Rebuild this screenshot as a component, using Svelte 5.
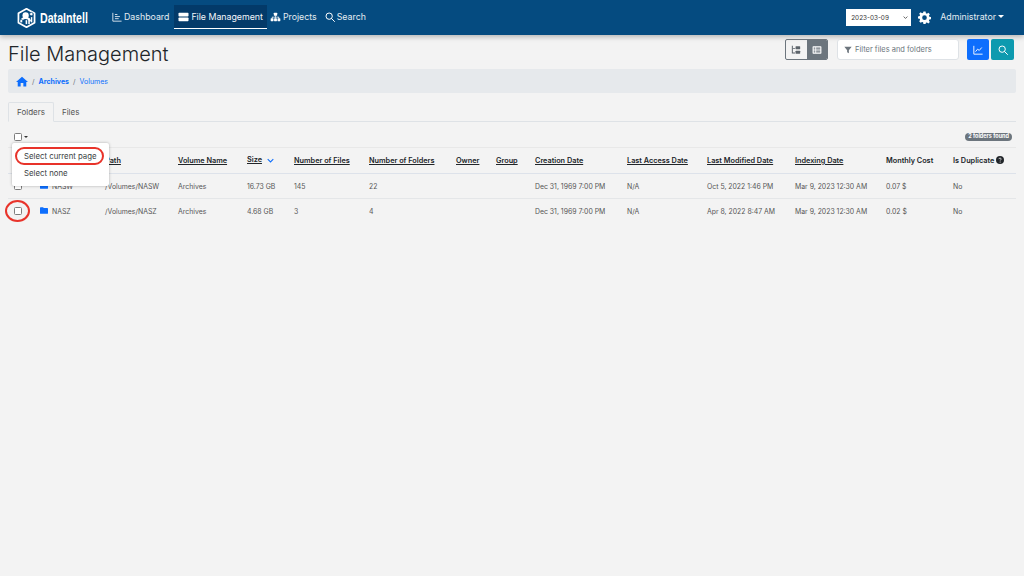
<script>
  const cols = ['c0','c1','c2','c3','c4','c5','c6','c7','c8','c9','c10','c11','c12','c13','c14'];
  const heads = [
    ['Path','path'],['Volume Name'],['Size'],['Number of Files'],['Number of Folders'],['Owner'],['Group'],
    ['Creation Date'],['Last Access Date'],['Last Modified Date'],['Indexing Date']
  ];
  const rows = [
    ['NASW','/Volumes/NASW','Archives','16.73 GB','145','22','','','Dec 31, 1969 7:00 PM','N/A','Oct 5, 2022 1:46 PM','Mar 9, 2023 12:30 AM','0.07 $','No'],
    ['NASZ','/Volumes/NASZ','Archives','4.68 GB','3','4','','','Dec 31, 1969 7:00 PM','N/A','Apr 8, 2022 8:47 AM','Mar 9, 2023 12:30 AM','0.02 $','No']
  ];
</script>

<header class="nav">
  <div class="brand">
    <svg class="logo" viewBox="0 0 24 24" width="21" height="22" fill="none">
      <path d="M12 1.500 21.200 6.700V17.300L12 22.500 2.800 17.300V6.700Z" stroke="#fff" stroke-width="2" stroke-linejoin="round"/>
      <circle cx="11" cy="9" r="3.600" fill="#fff"/>
      <path d="M5.500 17c.4-3.400 2.600-5 5.500-5s4 1 5 3" stroke="#fff" stroke-width="2.200" stroke-linecap="round"/>
      <circle cx="17.500" cy="7.500" r="2" fill="#fff" stroke="#054b80" stroke-width=".8"/>
      <circle cx="6" cy="15.500" r="1.800" fill="#fff" stroke="#054b80" stroke-width=".8"/>
      <rect x="11" y="14.500" width="1.800" height="4.500" fill="#fff"/>
      <rect x="14" y="12.500" width="1.800" height="6.500" fill="#fff"/>
      <rect x="17" y="11" width="1.600" height="6" fill="#fff"/>
    </svg>
    <span class="brandname">DataIntell</span>
  </div>
  <nav class="links">
    <a class="link">
      <svg viewBox="0 0 12 12" width="10" height="10" fill="none" stroke="#dfe8f0" stroke-width="1.100"><path d="M1 1v10h10.500"/><path d="M3.500 3h3M3.500 5.500h6M3.500 8h4.500"/></svg>
      Dashboard
    </a>
    <a class="link active">
      <svg viewBox="0 0 12 12" width="11" height="10" fill="#fff"><rect x="0" y="1" width="12" height="4.400" rx=".8"/><rect x="0" y="6.600" width="12" height="4.400" rx=".8"/></svg>
      File Management
    </a>
    <a class="link">
      <svg viewBox="0 0 12 12" width="11" height="10" fill="#fff"><rect x="4" y="1" width="4" height="3.400" rx=".5"/><rect x=".2" y="7.600" width="3.400" height="3.400" rx=".5"/><rect x="4.300" y="7.600" width="3.400" height="3.400" rx=".5"/><rect x="8.400" y="7.600" width="3.400" height="3.400" rx=".5"/><path d="M5.600 4h.8v1.700h4v2h-.8V6.500H6.400v1.200h-.8V6.500H2.400v1.200h-.8v-2h4Z"/></svg>
      Projects
    </a>
    <a class="link">
      <svg viewBox="0 0 12 12" width="10" height="10" fill="none" stroke="#fff" stroke-width="1.200"><circle cx="5" cy="5" r="3.800"/><path d="m8 8 3.400 3.400" stroke-linecap="round"/></svg>
      Search
    </a>
  </nav>
  <div class="navright">
    <div class="date"><span>2023-03-09</span><svg viewBox="0 0 8 8" width="5" height="5" fill="none" stroke="#444" stroke-width="1.300"><path d="m1 2.500 3 3 3-3"/></svg></div>
    <svg class="gear" viewBox="0 0 24 24" width="13" height="13" fill="#fff"><path fill-rule="evenodd" d="M10 1h4l.6 3.100 1.900.8L19.100 3.100 21.900 6l-1.800 2.600.8 1.900L24 11v4l-3.100.6-.8 1.900 1.800 2.600-2.800 2.800-2.600-1.800-1.900.8L14 24h-4l-.6-3.100-1.900-.8L4.900 21.900 2.100 19l1.800-2.600-.8-1.900L0 14v-4l3.100-.6.8-1.900L2.100 5 4.900 2.200l2.600 1.800 1.900-.8ZM12 8a4.300 4.300 0 1 0 0 8.600A4.300 4.300 0 0 0 12 8Z"/></svg>
    <span class="admin">Administrator</span><i class="caret white"></i>
  </div>
</header>

<main class="page">
  <div class="titlebar">
    <h1>File Management</h1>
    <div class="tools">
      <div class="toggle">
        <span class="tog">
          <svg viewBox="0 0 12 12" width="10" height="10" fill="#5c636a"><path d="M1 1h1.200v8H5v1.200H1Z"/><path d="M2 3.500h3v1H2Z"/><rect x="5.500" y="1.500" width="5.500" height="3.500" rx=".5"/><rect x="5.500" y="7" width="5.500" height="3.500" rx=".5"/></svg>
        </span>
        <span class="tog on">
          <svg viewBox="0 0 12 12" width="10" height="10" fill="#fff"><path fill-rule="evenodd" d="M1.500 1.500h9a.8.8 0 0 1 .8.800v7.400a.8.8 0 0 1-.8.800h-9a.8.8 0 0 1-.8-.8V2.300a.8.8 0 0 1 .8-.8ZM2 3v1.500h2V3Zm3 0v1.500h5V3ZM2 5.300v1.400h2V5.300Zm3 0v1.400h5V5.300ZM2 7.500V9h2V7.500Zm3 0V9h5V7.500Z"/></svg>
        </span>
      </div>
      <div class="filter">
        <svg viewBox="0 0 12 12" width="8" height="8" fill="#6c757d"><path d="M.5 1h11L7.300 6.300V11L4.700 9.500V6.300Z"/></svg>
        <span>Filter files and folders</span>
      </div>
      <div class="btns">
        <span class="btn blue"><svg viewBox="0 0 12 12" width="10" height="10" fill="none" stroke="#fff" stroke-width="1.100"><path d="M1 1v10h10.500"/><path d="m3 8 2.500-3 2 1.500L10.500 3"/></svg></span>
        <span class="btn teal"><svg viewBox="0 0 12 12" width="10" height="10" fill="none" stroke="#fff" stroke-width="1.200"><circle cx="5" cy="5" r="3.800"/><path d="m8 8 3.400 3.400" stroke-linecap="round"/></svg></span>
      </div>
    </div>
  </div>

  <div class="crumb">
    <svg viewBox="0 0 16 14" width="12" height="11" fill="#0d6efd"><path d="M8 .5 16 7.500h-2.300V13.500H9.800V9H6.200V13.500H2.300V7.500H0Z"/></svg>
    <span class="sep">/</span><b>Archives</b><span class="sep">/</span><span class="vol">Volumes</span>
  </div>

  <div class="tabs">
    <span class="tab active">Folders</span>
    <span class="tab">Files</span>
  </div>

  <div class="selectbar">
    <span class="sel"><span class="cb"></span><i class="caret dark"></i></span>
    <span class="badge">2 folders found</span>
    <div class="menu">
      <span class="ring"></span>
      <div class="mi">Select current page</div>
      <div class="mi">Select none</div>
    </div>
  </div>

  <table>
    <colgroup>{#each cols as c}<col class={c} />{/each}</colgroup>
    <thead>
      <tr>
        <th></th><th></th>
        {#each heads as h}
          <th><u class:sz={h[0]==='Size'}>{h[0]}</u>{#if h[0]==='Size'}<svg class="chev" viewBox="0 0 10 6" width="7" height="5" fill="none" stroke="#0d6efd" stroke-width="1.500"><path d="m1 1 4 4 4-4"/></svg>{/if}</th>
        {/each}
        <th>Monthly Cost</th>
        <th class="nowrap">Is Duplicate <svg class="help" viewBox="0 0 12 12" width="8" height="8"><circle cx="6" cy="6" r="6" fill="#212529"/><path d="M4.300 4.700c0-1 .8-1.600 1.800-1.600s1.700.6 1.700 1.500c0 1.200-1.500 1.200-1.500 2.300" fill="none" stroke="#fff" stroke-width="1.100"/><circle cx="6.200" cy="9" r=".8" fill="#fff"/></svg></th>
      </tr>
    </thead>
    <tbody>
      {#each rows as r, i}
        <tr>
          <td class="cbc"><span class="cb"></span>{#if i===1}<span class="circle"></span>{/if}</td>
          <td class="namec">
            <svg viewBox="0 0 12 10" width="8" height="7" fill="#0d6efd"><path d="M0 1a1 1 0 0 1 1-1h3.500l1.200 1.300H11a1 1 0 0 1 1 1V9a1 1 0 0 1-1 1H1a1 1 0 0 1-1-1Z"/></svg>
            <span>{r[0]}</span>
          </td>
          {#each r.slice(1) as v}<td>{v}</td>{/each}
        </tr>
      {/each}
    </tbody>
  </table>
</main>

<style>
  :global(body) { margin: 0; background: #f3f3f3; font-family: Inter, "Liberation Sans", sans-serif; color: #212529; }
  .nav { height: 35px; background: #054b80; display: flex; align-items: center; box-shadow: 0 2px 5px rgba(0,0,0,.25); position: relative; color: #e4ebf1; }
  .brand { display: flex; align-items: center; margin-left: 16px; gap: 3px; width: 92px; flex: none; }
  .logo { flex: none; }
  .brandname { font-family: "Liberation Sans", sans-serif; font-weight: 700; font-size: 14px; color: #fff; display: inline-block; transform: scaleX(.76); transform-origin: left center; }
  .links { display: flex; align-items: stretch; height: 24px; margin-top: -1px; }
  .link { display: flex; align-items: center; gap: 2px; padding: 0 4px; font-size: 8.800px; white-space: nowrap; color: #e4ebf1; box-sizing: border-box; border-bottom: 1px solid transparent; }
  .link.active { background: #033a69; border-bottom-color: #fff; color: #f3f6f9; margin-left: 1px; margin-right: -1px; }
  .navright { margin-left: auto; display: flex; align-items: center; margin-right: 20px; }
  .date { width: 65px; height: 17px; background: #fff; display: flex; align-items: center; justify-content: space-between; box-sizing: border-box; padding: 0 3px 0 5px; font-size: 6.400px; color: #333; margin-right: 7px; }
  .gear { margin-right: 9px; }
  .admin { font-size: 8.800px; margin-right: 2px; margin-top: -2px; }
  .caret { display: inline-block; width: 0; height: 0; border-left: 3px solid transparent; border-right: 3px solid transparent; border-top: 3px solid; }
  .caret.white { border-top-color: #fff; margin-top: -2px; }
  .caret.dark { border-left-width: 2.500px; border-right-width: 2.500px; border-top-width: 2.500px; border-top-color: #333; margin-left: 2px; }

  .page { padding: 0 8px; position: relative; }
  .titlebar { display: flex; justify-content: space-between; align-items: flex-start; height: 34px; padding-top: 4px; box-sizing: border-box; }
  h1 { margin: 3px 0 0; font-size: 20px; line-height: 24px; font-weight: 300; color: #212529; }
  .tools { display: flex; align-items: center; margin-right: 2px; }
  .toggle { display: flex; width: 43px; height: 21px; border: 1px solid #6c757d; border-radius: 2px; box-sizing: border-box; overflow: hidden; margin-right: 9px; }
  .tog { flex: 1; display: flex; align-items: center; justify-content: center; }
  .tog.on { background: #6c757d; }
  .filter { width: 122px; height: 21px; box-sizing: border-box; background: #fff; border: 1px solid #dee2e6; border-radius: 3px; display: flex; align-items: center; gap: 3px; padding-left: 6px; font-size: 7.500px; color: #6c757d; margin-right: 8px; }
  .btns { display: flex; gap: 2px; }
  .btn { width: 22px; height: 21px; border-radius: 2px; display: flex; align-items: center; justify-content: center; }
  .blue { background: #0d6efd; }
  .teal { background: #0d9aaf; width: 23px; }

  .crumb { height: 24px; background: #e6e9ec; border-radius: 2px; display: flex; align-items: center; padding-left: 8px; font-size: 7px; color: #0d6efd; }
  .crumb b { font-weight: 700; }
  .sep { color: #6c757d; margin: 0 4px; }

  .tabs { display: flex; height: 20px; box-sizing: border-box; margin-top: 9px; border-bottom: 1px solid #dee2e6; font-size: 8px; color: #555; }
  .tab { padding: 0 8px; display: flex; align-items: center; height: 19px; box-sizing: border-box; }
  .tab.active { border: 1px solid #dee2e6; border-bottom-color: #f3f3f3; border-radius: 2px 2px 0 0; height: 20px; }

  .selectbar { position: relative; height: 25px; padding-top: 5px; box-sizing: border-box; display: flex; align-items: center; justify-content: space-between; }
  .sel { display: flex; align-items: center; margin-left: 6px; }
  .cb { display: inline-block; width: 6px; height: 6px; border: 1px solid #7d7d7d; border-radius: 1.500px; background: #fff; box-sizing: content-box; }
  .badge { background: #6c757d; color: #fff; font-size: 5.500px; font-weight: 700; padding: 1.500px 3px; border-radius: 5px; margin-right: 4px; line-height: 5.500px; }
  .menu { position: absolute; z-index: 3; left: 4px; top: 21px; width: 97px; height: 43px; background: #fff; border-radius: 2px; box-shadow: 0 0 3px rgba(0,0,0,.3); padding-top: 5px; box-sizing: border-box; font-size: 7.800px; color: #3a3f44; }
  .mi { height: 17px; line-height: 17px; padding-left: 12px; }
  .ring { position: absolute; left: 3px; top: 4px; width: 89px; height: 18px; border: 2px solid #e8332a; border-radius: 10px; box-sizing: border-box; }
  .circle { position: absolute; left: -3px; top: 1px; width: 25px; height: 22px; box-sizing: border-box; border: 2px solid #e8332a; border-radius: 50%; }

  table { border-collapse: collapse; table-layout: fixed; width: 1008px; font-size: 6.900px; color: #555; }
  .c0 { width: 32px; } .c1 { width: 65px; } .c2 { width: 73px; } .c3 { width: 69px; } .c4 { width: 47px; }
  .c5 { width: 75px; } .c6 { width: 87px; } .c7 { width: 40px; } .c8 { width: 39px; } .c9 { width: 92px; }
  .c10 { width: 80px; } .c11 { width: 88px; } .c12 { width: 91px; } .c13 { width: 67px; } .c14 { width: 63px; }
  th { height: 26px; padding: 0; text-align: left; font-size: 7.300px; font-weight: 600; color: #212529; border-top: 1px solid #e8e8e8; border-bottom: 1px solid #dde2ea; white-space: nowrap; box-sizing: border-box; }
  th u { text-decoration: underline; }
  .sz { position: relative; top: -1px; }
  .chev { margin-left: 5px; }
  .help { vertical-align: -1px; }
  td { height: 25px; padding: 0; border-bottom: 1px solid #e4e6e8; white-space: nowrap; box-sizing: border-box; }
  tbody tr:last-child td { border-bottom: none; }
  .cbc { position: relative; padding-left: 6px; line-height: 0; }
  .namec svg { margin-right: 2px; }
</style>
